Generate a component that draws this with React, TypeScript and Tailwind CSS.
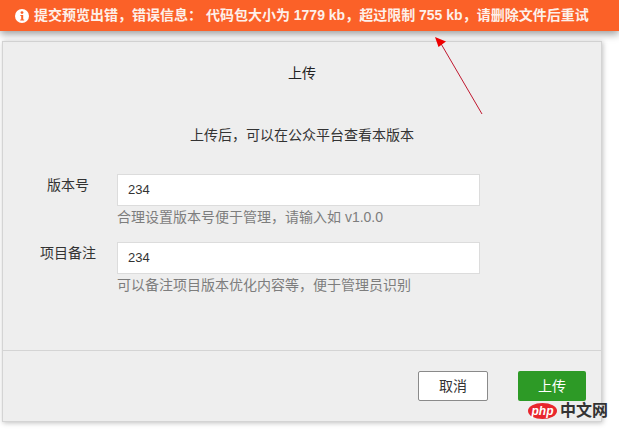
const FONT = "font-['Liberation_Sans','Noto_Sans_CJK_SC',sans-serif]";

const FIELDS = [
  { label: "版本号", value: "234", hint: "合理设置版本号便于管理，请输入如 v1.0.0" },
  { label: "项目备注", value: "234", hint: "可以备注项目版本优化内容等，便于管理员识别" },
];

function InfoIcon() {
  return (
    <svg width="14" height="14" viewBox="0 0 14 14" className="shrink-0">
      <circle cx="7" cy="7" r="7" fill="#fff" />
      <circle cx="7" cy="3.6" r="1.4" fill="#fb6128" />
      <path d="M5.4 6h2.8v4.4h1v1.1H5.2v-1.1h1V7.1h-.8z" fill="#fb6128" />
    </svg>
  );
}

export default function App() {
  return (
    <div className={`relative h-[429px] w-[619px] overflow-hidden bg-white ${FONT}`}>
      <div className="relative z-10 flex h-[31px] items-center gap-[5px] bg-[#fb6128] pl-[15px] text-[14px] font-bold text-[#fdf0ea] shadow-[0_3px_8px_rgba(0,0,0,0.4)]">
        <InfoIcon />
        <span className="whitespace-pre">提交预览出错，错误信息： 代码包大小为 1779 kb，超过限制 755 kb，请删除文件后重试</span>
      </div>

      <div className="mt-[10px] ml-[2px] flex h-[381px] w-[600px] flex-col border border-[#d4d4d4] bg-[#eeeeee] shadow-[1px_1px_5px_rgba(0,0,0,0.25)]">
        <h1 className="pt-[22px] text-center text-[14px] leading-[18px] text-[#222]">上传</h1>
        <p className="mt-[44px] text-center text-[14px] leading-[18px] text-[#333]">上传后，可以在公众平台查看本版本</p>

        <div className="mt-[30px] flex flex-col gap-[16px]">
          {FIELDS.map((f) => (
            <div key={f.label} className="flex">
              <label className="ml-[35px] w-[60px] pt-[2px] text-center text-[14px] leading-[18px] text-[#333]">{f.label}</label>
              <div className="ml-[19px]">
                <div className="flex h-[32px] w-[363px] items-center border border-[#dcdcdc] bg-white pl-[10px] text-[13px] text-[#333]">
                  {f.value}
                </div>
                <p className="mt-[2px] text-[14px] leading-[18px] text-[#7d7d7d]">{f.hint}</p>
              </div>
            </div>
          ))}
        </div>

        <div className="mt-auto flex h-[71px] justify-end gap-[30px] border-t border-[#d4d4d4] pt-[20px] pr-[15px]">
          <button className="h-[30px] w-[70px] rounded-[2px] border border-[#8a8a8a] bg-white text-[14px] text-[#333]">取消</button>
          <button className="h-[30px] w-[68px] rounded-[2px] bg-[#2d9a26] text-[14px] text-white">上传</button>
        </div>
      </div>

      <svg width="60" height="90" viewBox="0 0 60 90" className="absolute top-[32px] left-[430px] z-20">
        <path d="M52 82 L10 10" stroke="#c0182f" strokeWidth="1" fill="none" />
        <path d="M5 5 L16 9.5 L8.5 15 Z" fill="#ee0000" />
      </svg>

      <div className="absolute top-[403px] left-[528px] z-20 flex items-center gap-[3px]">
        <span className="flex h-[16px] w-[29px] items-center justify-center rounded-[50%] bg-[#e8262d] text-[12px] leading-none font-bold text-white italic">php</span>
        <span className="text-[16px] leading-none font-bold text-[#333]">中文网</span>
      </div>
    </div>
  );
}
